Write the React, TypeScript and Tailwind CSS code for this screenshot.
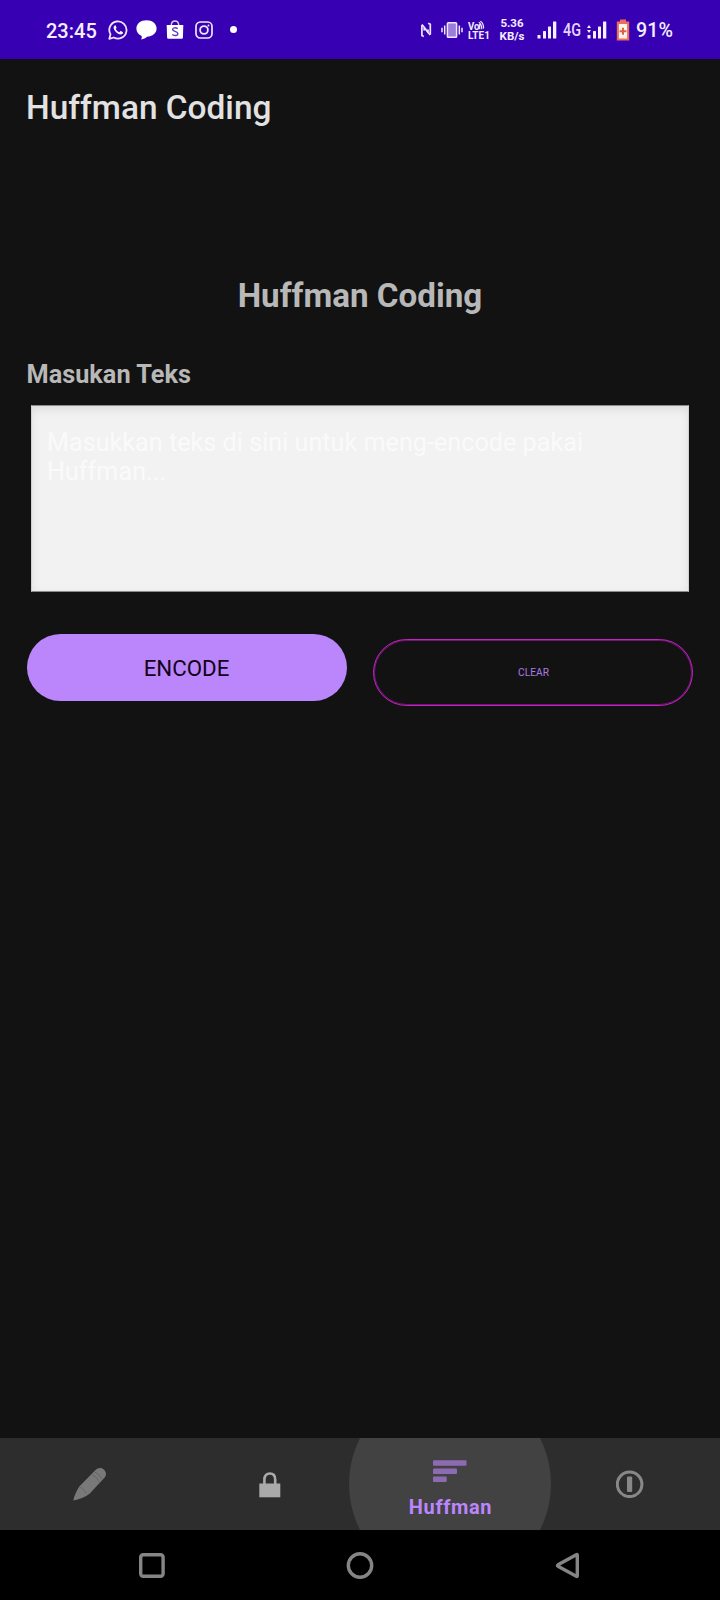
import React from "react";

function WhatsAppIcon() {
  return (
    <svg className="ml-[12px] h-[20px] w-[20px] shrink-0" viewBox="0 0 20 20" fill="none">
      <path d="M1.3 18.8 2.5 14.3A8.6 8.6 0 1 1 5.8 17.5Z" stroke="#efe5ff" strokeWidth="1.8" strokeLinejoin="round" />
      <path d="M6.9 5.4c-.6.2-1.4 1-1.3 2.3.2 2.8 3.700 6.500 7 6.700 1.300.1 2.300-.7 2.400-1.700 0-.5 0-.6-.4-.8l-1.700-.8c-.3-.1-.5 0-.7.2l-.8.9c-1.600-.6-2.900-1.800-3.600-3.200l.7-.9c.1-.2.1-.4 0-.6l-.7-1.700c-.2-.4-.5-.5-.9-.4Z" fill="#f5efff" />
    </svg>
  );
}

function ChatIcon() {
  return (
    <svg className="ml-[8px] h-[20px] w-[21px] shrink-0" viewBox="0 0 21 20">
      <path d="M10.500.300C16.300.300 20.600 3.700 20.600 8.600c0 4.700-4.100 8-9.600 8.200-1.300 1.300-3.400 2.400-5.800 2.700.5-1.100.7-2.200.5-3.500C2.400 14.600.4 12 .4 8.600.4 3.700 4.700.3 10.500.3Z" fill="#fff" />
    </svg>
  );
}

function ShopIcon() {
  return (
    <svg className="ml-[9px] h-[19px] w-[18px] shrink-0" viewBox="0 0 18 19">
      <path d="M5.200 5.500C5.300 2.600 6.800 1 9 1s3.700 1.600 3.800 4.500" fill="none" stroke="#d9ccf5" strokeWidth="1.400" />
      <path d="M.7 5h16.600l-.4 12.500c-.1.900-.5 1.300-1.300 1.300H2.400c-.8 0-1.200-.4-1.300-1.300Z" fill="#fff" />
      <path d="M11.700 8.700C9.600 7.300 6.600 7.500 6.600 9.500c0 2.300 5.300 1.500 5.300 4.200 0 2.100-3.300 2.500-5.700.8" fill="none" stroke="#5f3bb8" strokeWidth="1.400" />
    </svg>
  );
}

function InstagramIcon() {
  return (
    <svg className="ml-[11px] h-[18px] w-[18px] shrink-0" viewBox="0 0 18 18" fill="none" stroke="#efe5ff">
      <rect x="1" y="1" width="16" height="16" rx="4.300" strokeWidth="1.700" />
      <circle cx="9" cy="9" r="3.900" strokeWidth="1.800" />
      <circle cx="13.500" cy="4.500" r="1" fill="#efe5ff" stroke="none" />
    </svg>
  );
}

function NfcIcon() {
  return (
    <svg className="h-[18px] w-[12px] shrink-0" viewBox="0 0 12 18" fill="none" stroke="#eee5ff" strokeLinejoin="round">
      <path d="M3.800 15.600 1.900 14.600V4M8.200 2.200 10.300 3.200V13.500" strokeWidth="1.700" />
      <path d="M1.900 3.500 4.200 6.200 8 11.500l2.300 2.300M4.200 6V9.500M8 8.500V12" strokeWidth="1.700" />
    </svg>
  );
}

function VibrateIcon() {
  return (
    <svg className="ml-[9px] h-[18px] w-[22px] shrink-0" viewBox="0 0 22 18" fill="none" stroke="#eee5ff" strokeWidth="1.500">
      <rect x="6.400" y="1.800" width="9.200" height="14.400" rx=".8" fill="#9c7ddb" />
      <path d="M3.700 4.500v9M1 6.700v4.600M18.300 4.500v9M21 6.700v4.600" />
    </svg>
  );
}

function VolteIcon() {
  return (
    <svg className="ml-[4px] h-[20px] w-[24px] shrink-0 overflow-visible" viewBox="0 0 24 20" fill="#f3ecff">
      <text x="1" y="9.500" fontSize="10" fontWeight="700" fontFamily="Roboto, sans-serif" textLength="11.500" lengthAdjust="spacingAndGlyphs">Vo</text>
      <path d="M12.700 4v5.300M11.800 2.300q3 2 3 7M13.300 1.300q3.400 2 3.300 7.200" fill="none" stroke="#f3ecff" strokeWidth="1.200" />
      <text x="1" y="19" fontSize="10.500" fontWeight="700" fontFamily="Roboto, sans-serif" textLength="16" lengthAdjust="spacingAndGlyphs">LTE</text>
      <text x="17.300" y="19" fontSize="10" fontWeight="700" fontFamily="Roboto, sans-serif">1</text>
    </svg>
  );
}

function SignalIcon({ data = false, className }: { data?: boolean; className: string }) {
  return (
    <svg className={className} viewBox="0 0 20 18" fill="#f5f0ff">
      <rect x="0.500" y="14" width="3" height="3.500" rx=".5" />
      <rect x="6" y="10" width="3" height="7.500" rx=".5" />
      <rect x="11" y="5.500" width="3" height="12" rx=".5" />
      <rect x="16" y="0.500" width="3.300" height="17" rx=".5" />
      {data && <path d="M0 7 2 4l2 3ZM0 9h4l-2 3Z" />}
    </svg>
  );
}

function BatteryIcon() {
  return (
    <svg className="ml-[9px] h-[22px] w-[14px] shrink-0" viewBox="0 0 14 22">
      <path d="M4 .500h6v2h3.200v19H.8v-19H4Z" fill="#ec6c5d" />
      <rect x="2.900" y="5" width="8.200" height="14.500" fill="#fff5e8" />
      <path d="M7 8.700v7M3.600 12.200h6.800" stroke="#dc613c" strokeWidth="2" />
    </svg>
  );
}

function StatusBar() {
  return (
    <header className="flex h-[59px] shrink-0 items-center bg-[#3700b3] pl-[46px] text-[#f3edff]">
      <span className="w-[50px] pt-[2px] text-[20px] leading-none font-medium">23:45</span>
      <WhatsAppIcon />
      <ChatIcon />
      <ShopIcon />
      <InstagramIcon />
      <span className="ml-[16.500px] size-[7px] rounded-full bg-white" />
      <div className="ml-[183.500px] flex items-center">
        <NfcIcon />
        <VibrateIcon />
        <VolteIcon />
        <div className="ml-[8px] w-[26px] text-center text-[11.500px] leading-[12.500px] font-bold whitespace-nowrap">
          <div>5.36</div>
          <div>KB/s</div>
        </div>
        <SignalIcon className="ml-[12px] h-[18px] w-[20px] shrink-0" />
        <svg className="ml-[5px] h-[24px] w-[20px] shrink-0 overflow-visible" viewBox="0 0 20 24">
          <text x="1" y="18.300" fontSize="17.500" fontWeight="500" fill="#e2d7fb" fontFamily="Roboto, sans-serif" textLength="18" lengthAdjust="spacingAndGlyphs">4G</text>
        </svg>
        <SignalIcon data className="ml-[5px] h-[18px] w-[20px] shrink-0" />
        <BatteryIcon />
        <span className="ml-[6px] pt-[2px] text-[19.700px] leading-none font-medium">91%</span>
      </div>
    </header>
  );
}

function BottomTabs() {
  return (
    <nav className="grid h-[92px] shrink-0 grid-cols-4 overflow-hidden bg-[#2d2d2d]">
      <button className="flex items-center justify-center">
        <svg className="h-[34px] w-[34px]" viewBox="0 0 34 34">
          <path d="M.3 33.400C1.300 29 3.600 23.500 6.300 19.600L22.300 3.300C25 .700 28.500.300 31 2.700s2.700 5.600.2 8.400L16.800 26.600C12.500 30.300 6 32.500.3 33.400Z" fill="#797979" />
          <path d="M6.500 20.200q4.500 1 6.400 6.300M18.800 7.500q5.600 2.500 7.500 7.700M22 5.200q4.800 2 6.700 6.700" stroke="#666" fill="none" strokeWidth="1" />
        </svg>
      </button>
      <button className="flex items-center justify-center pt-[1px]">
        <svg className="h-[26px] w-[22px]" viewBox="0 0 22 26">
          <path d="M5.400 12V7.500C5.400 3.700 7.500 1.500 10.800 1.500s5.400 2.200 5.400 6V12" fill="none" stroke="#aaa" strokeWidth="2.600" />
          <path d="M.3 11.500h21V25.300H.3Z" fill="#aaa" />
        </svg>
      </button>
      <button className="-mx-[11px] -my-[55px] flex h-[202px] w-[202px] flex-col items-center rounded-full bg-[#424242] pt-[76px]">
        <svg className="h-[24px] w-[34px]" viewBox="0 0 34 24" fill="#8d6bb3">
          <rect x="0" y="1.300" width="33.500" height="5.400" rx="1" />
          <rect x="0" y="9.600" width="24" height="5.400" rx="1" />
          <rect x="0" y="17.600" width="13.700" height="5.400" rx="1" />
        </svg>
        <span className="mt-[12px] pl-[1px] text-[20px] leading-[24px] font-bold tracking-[0.650px] text-[#bb86fc]">Huffman</span>
      </button>
      <button className="flex items-center justify-center">
        <svg className="h-[28px] w-[28px]" viewBox="0 0 28 28">
          <circle cx="13.600" cy="14.300" r="12.300" fill="none" stroke="#888" strokeWidth="3" />
          <rect x="11" y="6.500" width="5.200" height="15.500" rx="1" fill="#888" />
        </svg>
      </button>
    </nav>
  );
}

function SystemNav() {
  return (
    <footer className="flex h-[70px] shrink-0 items-center justify-between bg-black px-[138px] pt-[1px] text-[#858585]">
      <svg className="h-[28px] w-[28px]" viewBox="0 0 28 28" fill="none" stroke="currentColor" strokeWidth="3.400">
        <rect x="2.700" y="2.700" width="22.400" height="21.600" rx="2.500" />
      </svg>
      <svg className="h-[28px] w-[28px]" viewBox="0 0 28 28" fill="none" stroke="currentColor" strokeWidth="3.400">
        <circle cx="14" cy="13.500" r="11.700" />
      </svg>
      <svg className="h-[28px] w-[28px]" viewBox="0 0 28 28" fill="none" stroke="currentColor" strokeWidth="3.400" strokeLinejoin="round">
        <path d="M23.300 3.100V23.900q0 1-1 .4L4 14.200q-1-.7 0-1.400L22.300 2.700q1-.5 1 .4Z" />
      </svg>
    </footer>
  );
}

export default function App() {
  return (
    <div className="flex h-[1600px] w-[720px] flex-col overflow-hidden bg-[#121212] font-['Roboto',sans-serif]">
      <StatusBar />
      <div className="flex h-[92px] shrink-0 items-center px-[26px] pt-[5px]">
        <h1 className="text-[33.400px] leading-[40px] font-medium text-[#e2e2e2]">Huffman Coding</h1>
      </div>
      <main className="flex-1 px-[26.500px] pt-[125px]">
        <h2 className="text-center text-[33.200px] leading-[39px] font-bold text-[#b8b8b8]">Huffman Coding</h2>
        <label htmlFor="source-text" className="mt-[45px] block text-[25.300px] leading-[30px] font-bold text-[#b8b8b8]">
          Masukan Teks
        </label>
        <div className="mt-[15px] px-[4.500px]">
          <textarea
            id="source-text"
            placeholder="Masukkan teks di sini untuk meng-encode pakai Huffman..."
            className="block h-[187px] w-[658px] resize-none border border-[#8a8a8a] border-x-[#d0d0d0] bg-[#f2f2f2] px-[15px] pt-[22px] text-[25.200px] leading-[29px] shadow-[inset_0_6px_10px_-2px_#dedede,inset_0_0_6px_#e8e8e8] outline-none placeholder:text-[#fafafa] placeholder:opacity-100"
          />
        </div>
        <div className="mt-[42px] flex gap-[26px]">
          <button className="h-[67px] w-[320px] rounded-full bg-[#bb86fc] pt-[3px] text-[22.300px] text-[#120018]">ENCODE</button>
          <button className="mt-[5px] h-[67px] w-[320px] rounded-full border border-[#c322c5] pl-[2px] text-[10.200px] text-[#aa7be4] shadow-[inset_0_0_0_1px_#6f166f]">CLEAR</button>
        </div>
      </main>
      <BottomTabs />
      <SystemNav />
    </div>
  );
}
